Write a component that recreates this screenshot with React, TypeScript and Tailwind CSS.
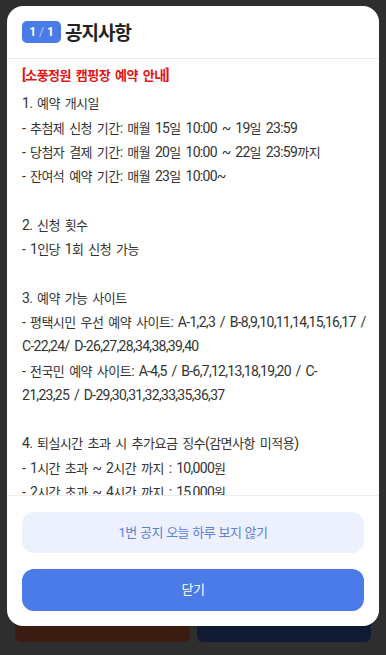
import React from "react";

// each entry is one visual line of the notice; "" is an empty line
const lines: string[] = [
  "1. 예약 개시일",
  "- 추첨제 신청 기간: 매월 15일 10:00 ~ 19일 23:59",
  "- 당첨자 결제 기간: 매월 20일 10:00 ~ 22일 23:59까지",
  "- 잔여석 예약 기간: 매월 23일 10:00~",
  "",
  "2. 신청 횟수",
  "- 1인당 1회 신청 가능",
  "",
  "3. 예약 가능 사이트",
  "- 평택시민 우선 예약 사이트: A-1,2,3 / B-8,9,10,11,14,15,16,17 /",
  "C-22,24/ D-26,27,28,34,38,39,40",
  "- 전국민 예약 사이트: A-4,5 / B-6,7,12,13,18,19,20 / C-",
  "21,23,25 / D-29,30,31,32,33,35,36,37",
  "",
  "4. 퇴실시간 초과 시 추가요금 징수(감면사항 미적용)",
  "- 1시간 초과 ~ 2시간 까지 : 10,000원",
  "- 2시간 초과 ~ 4시간 까지 : 15,000원",
  "- 4시간 초과 시 : 1일 이용료 징수",
];

// hangul runs are set a bit smaller than the latin/digits around them
function Mixed({ text }: { text: string }) {
  const parts = text.split(/([\uAC00-\uD7A3]+)/);
  return (
    <>
      {parts.map((p, i) =>
        i % 2 === 1 ? (
          <span key={i} className="text-[13px] leading-none tracking-[-0.5px]">
            {p}
          </span>
        ) : (
          p
        )
      )}
    </>
  );
}

export default function App() {
  return (
    <div className="relative h-[655px] w-full overflow-hidden bg-[#2e2e2e] font-['Roboto','Noto_Sans_CJK_KR',sans-serif]">
      {/* page behind the dialog */}
      <div className="flex h-full flex-col justify-end px-[15px] pb-[13px]">
        <div className="flex gap-[7px]">
          <div className="h-[44px] flex-1 rounded-[6px] bg-[#3b1c11]" />
          <div className="h-[44px] flex-1 rounded-[6px] bg-[#101b33]" />
        </div>
      </div>

      {/* dialog */}
      <div className="absolute inset-0 flex justify-center px-[7px] pt-[6px]">
        <div className="flex h-[620px] w-[372px] flex-col overflow-hidden rounded-[16px] bg-white">
          <div className="flex h-[53px] shrink-0 items-center gap-[4px] border-b border-[#ececec] px-[15px]">
            <span className="flex h-[22px] w-[39px] items-center justify-center rounded-[5px] bg-[#4a7be8] text-[12px] font-bold text-white">
              1<span className="mx-[3px] font-normal text-[#b9cdf6]">/</span>1
            </span>
            <span className="font-['Noto_Sans_CJK_KR',sans-serif] text-[19px] font-bold tracking-[-1px] text-[#222]">
              공지사항
            </span>
          </div>

          <div className="flex-1 overflow-hidden px-[15px] pt-[4px] text-[14px] leading-[24.3px] tracking-[-0.7px] text-[#333] [word-spacing:2px]">
            <div className="mb-[4px] h-[24.3px] font-bold text-[#e01515]">
              <Mixed text="[소풍정원 캠핑장 예약 안내]" />
            </div>
            {lines.map((l, i) =>
              l === "" ? (
                <div key={i} className="h-[24.3px]" />
              ) : (
                <div key={i} className="h-[24.3px] whitespace-nowrap">
                  <Mixed text={l} />
                </div>
              )
            )}
          </div>

          <div className="flex shrink-0 flex-col gap-[16px] border-t border-[#ececec] px-[15px] pb-[15px] pt-[16px]">
            <button className="h-[41px] rounded-[12px] bg-[#ecf1fd] text-[13px] tracking-[-0.5px] text-[#5b80d6] [word-spacing:0.5px]">
              1번 공지 오늘 하루 보지 않기
            </button>
            <button className="h-[42px] rounded-[12px] bg-[#4a7be8] text-[13px] tracking-[-0.5px] text-white">
              닫기
            </button>
          </div>
        </div>
      </div>
    </div>
  );
}
